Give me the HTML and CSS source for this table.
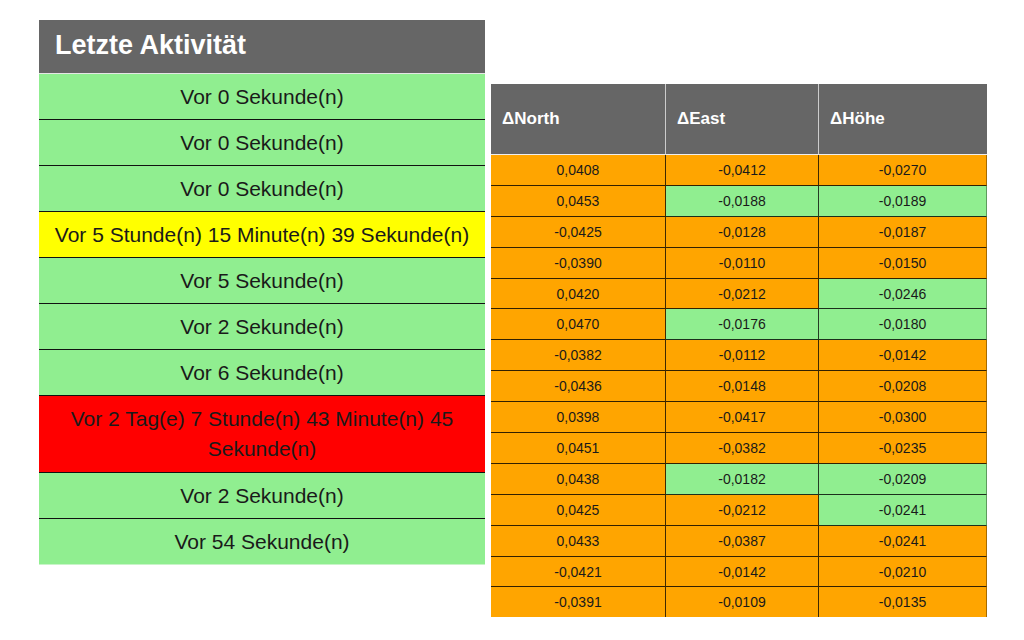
FILE: index.html
```html
<!DOCTYPE html>
<html lang="de">
<head>
<meta charset="utf-8">
<title>Letzte Aktivität</title>
<link rel="stylesheet" href="styles.css">
</head>
<body>
<div class="page">
  <section class="activity">
    <div class="activity-head">Letzte Aktivität</div>
    <div class="act-row ok">Vor 0 Sekunde(n)</div>
    <div class="act-row ok">Vor 0 Sekunde(n)</div>
    <div class="act-row ok">Vor 0 Sekunde(n)</div>
    <div class="act-row warn">Vor 5 Stunde(n) 15 Minute(n) 39 Sekunde(n)</div>
    <div class="act-row ok">Vor 5 Sekunde(n)</div>
    <div class="act-row ok">Vor 2 Sekunde(n)</div>
    <div class="act-row ok">Vor 6 Sekunde(n)</div>
    <div class="act-row bad">Vor 2 Tag(e) 7 Stunde(n) 43 Minute(n) 45 Sekunde(n)</div>
    <div class="act-row ok">Vor 2 Sekunde(n)</div>
    <div class="act-row ok last">Vor 54 Sekunde(n)</div>
  </section>

  <table class="deltas">
    <colgroup>
      <col class="c1"><col class="c2"><col class="c3">
    </colgroup>
    <thead>
      <tr><th>ΔNorth</th><th>ΔEast</th><th>ΔHöhe</th></tr>
    </thead>
    <tbody>
      <tr><td class="o">0,0408</td><td class="o">-0,0412</td><td class="o">-0,0270</td></tr>
      <tr><td class="o">0,0453</td><td class="g">-0,0188</td><td class="g">-0,0189</td></tr>
      <tr><td class="o">-0,0425</td><td class="o">-0,0128</td><td class="o">-0,0187</td></tr>
      <tr><td class="o">-0,0390</td><td class="o">-0,0110</td><td class="o">-0,0150</td></tr>
      <tr><td class="o">0,0420</td><td class="o">-0,0212</td><td class="g">-0,0246</td></tr>
      <tr><td class="o">0,0470</td><td class="g">-0,0176</td><td class="g">-0,0180</td></tr>
      <tr><td class="o">-0,0382</td><td class="o">-0,0112</td><td class="o">-0,0142</td></tr>
      <tr><td class="o">-0,0436</td><td class="o">-0,0148</td><td class="o">-0,0208</td></tr>
      <tr><td class="o">0,0398</td><td class="o">-0,0417</td><td class="o">-0,0300</td></tr>
      <tr><td class="o">0,0451</td><td class="o">-0,0382</td><td class="o">-0,0235</td></tr>
      <tr><td class="o">0,0438</td><td class="g">-0,0182</td><td class="g">-0,0209</td></tr>
      <tr><td class="o">0,0425</td><td class="o">-0,0212</td><td class="g">-0,0241</td></tr>
      <tr><td class="o">0,0433</td><td class="o">-0,0387</td><td class="o">-0,0241</td></tr>
      <tr><td class="o">-0,0421</td><td class="o">-0,0142</td><td class="o">-0,0210</td></tr>
      <tr class="last"><td class="o">-0,0391</td><td class="o">-0,0109</td><td class="o">-0,0135</td></tr>
    </tbody>
  </table>
</div>
</body>
</html>
```

FILE: styles.css
```css
html, body {
  margin: 0;
  padding: 0;
  background: #ffffff;
  font-family: "Liberation Sans", Arial, sans-serif;
}

.page {
  display: flex;
  align-items: flex-start;
  gap: 6px;
  padding: 20px 0 0 39px;
}

.activity {
  width: 446px;
  display: flex;
  flex-direction: column;
}

.activity-head {
  height: 54px;
  box-sizing: border-box;
  padding: 0 16px 2px;
  display: flex;
  align-items: center;
  background: #666666;
  color: #ffffff;
  font-weight: bold;
  font-size: 27px;
  border-bottom: 1px solid #e6e6e6;
}

.act-row {
  box-sizing: border-box;
  padding: 8px 12px 7px;
  line-height: 30px;
  font-size: 21px;
  color: #1a1a1a;
  text-align: center;
  border-bottom: 1px solid #111111;
  min-height: 46px;
}

.act-row.last {
  border-bottom: 1px solid #c8f5c8;
}

.ok { background: #90ee90; }
.warn { background: #ffff00; }
.bad { background: #ff0000; padding-top: 8px; padding-bottom: 8px; }

.deltas {
  margin-top: 64px;
  width: 496px;
  table-layout: fixed;
  border-collapse: separate;
  border-spacing: 0;
  font-size: 14px;
}

.deltas .c1 { width: 175px; }
.deltas .c2 { width: 153px; }
.deltas .c3 { width: 168px; }

.deltas th {
  height: 70px;
  padding: 0 11px;
  background: #666666;
  color: #ffffff;
  font-size: 17px;
  font-weight: bold;
  text-align: left;
  border-right: 1px solid #cccccc;
  border-bottom: 1px solid #eeeeee;
}

.deltas th:last-child {
  border-right: none;
}

.deltas td {
  height: 29.9px;
  padding: 0;
  text-align: center;
  color: #1a1a1a;
  border-right: 1px solid rgba(0, 0, 0, 0.75);
  border-bottom: 1px solid rgba(0, 0, 0, 0.8);
}

.deltas td:last-child {
  border-right: 1px solid rgba(0, 0, 0, 0.35);
}

.deltas tr.last td {
  border-bottom: none;
}

.deltas td.o { background: #ffa500; }
.deltas td.g { background: #90ee90; }
```
